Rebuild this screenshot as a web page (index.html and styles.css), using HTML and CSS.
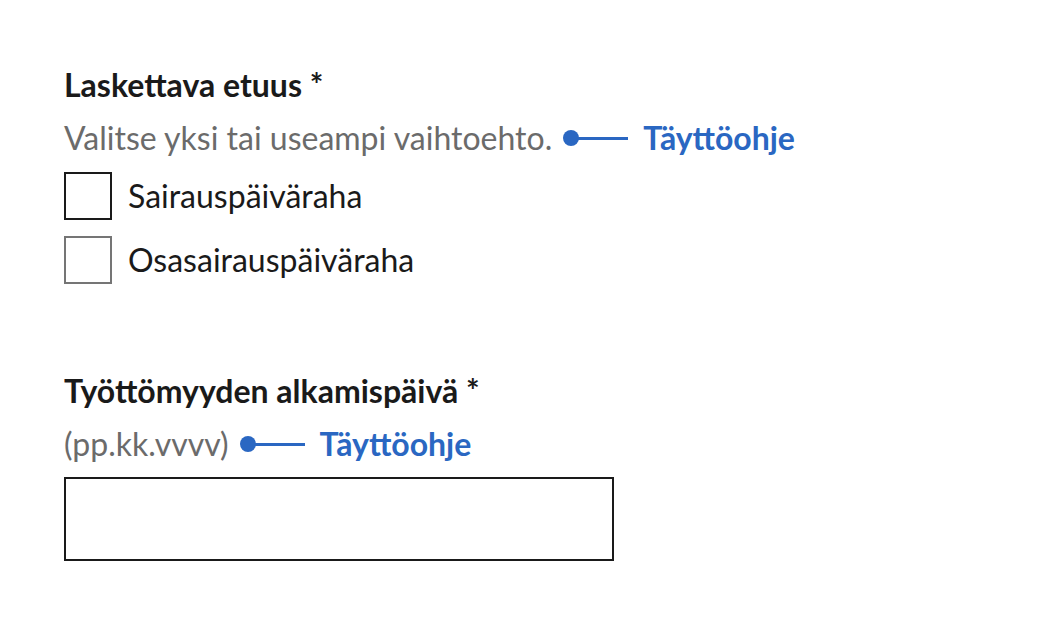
FILE: index.html
```html
<!DOCTYPE html>
<html lang="fi">
<head>
<meta charset="utf-8">
<link rel="stylesheet" href="styles.css">
</head>
<body>
<main class="form">
  <fieldset class="field">
    <legend class="label">Laskettava etuus *</legend>
    <div class="hint-row">
      <span class="hint">Valitse yksi tai useampi vaihtoehto.</span>
      <span class="connector"><span class="dot"></span><span class="line"></span></span>
      <a class="guide" href="#">Täyttöohje</a>
    </div>
    <label class="check"><span class="box box-dark"></span><span class="check-text">Sairauspäiväraha</span></label>
    <label class="check"><span class="box box-grey"></span><span class="check-text">Osasairauspäiväraha</span></label>
  </fieldset>
  <div class="field field-date">
    <div class="label">Työttömyyden alkamispäivä *</div>
    <div class="hint-row">
      <span class="hint">(pp.kk.vvvv)</span>
      <span class="connector"><span class="dot"></span><span class="line"></span></span>
      <a class="guide" href="#">Täyttöohje</a>
    </div>
    <div class="input"></div>
  </div>
</main>
</body>
</html>
```
FILE: styles.css
```css
html, body {
  margin: 0;
  padding: 0;
  background: #ffffff;
}
body {
  font-family: Lato, "Open Sans", sans-serif;
  color: #1a1a1a;
}
.form {
  padding: 67px 0 0 64px;
  display: flex;
  flex-direction: column;
}
.field {
  border: 0;
  margin: 0;
  padding: 0;
  display: flex;
  flex-direction: column;
}
.label {
  padding: 0;
  font-size: 32px;
  font-weight: 700;
  line-height: 36px;
  height: 36px;
  color: #1a1a1a;
}
.hint-row {
  display: flex;
  align-items: center;
  height: 40px;
  margin-top: 15px;
}
.hint {
  font-size: 32px;
  color: #6b6b6b;
  line-height: 40px;
}
.connector {
  display: flex;
  align-items: center;
  margin-left: 11px;
  margin-right: 15px;
}
.dot {
  width: 16px;
  height: 16px;
  border-radius: 50%;
  background: #2a67c2;
}
.line {
  width: 51px;
  height: 3px;
  background: #2a67c2;
  margin-left: -2px;
}
.guide {
  font-size: 32px;
  font-weight: 700;
  color: #2a67c2;
  text-decoration: none;
  line-height: 40px;
}
.check {
  display: flex;
  align-items: center;
  gap: 16px;
  margin-top: 14px;
}
.check + .check {
  margin-top: 16px;
}
.box {
  box-sizing: border-box;
  width: 48px;
  height: 48px;
  border: 2px solid #1a1a1a;
  background: #fff;
}
.box-grey {
  border-color: #757575;
}
.check-text {
  font-size: 32px;
  line-height: 40px;
  color: #1a1a1a;
}
.field-date {
  margin-top: 89px;
}
.input {
  box-sizing: border-box;
  width: 550px;
  height: 84px;
  border: 2px solid #1a1a1a;
  margin-top: 13px;
}
```
